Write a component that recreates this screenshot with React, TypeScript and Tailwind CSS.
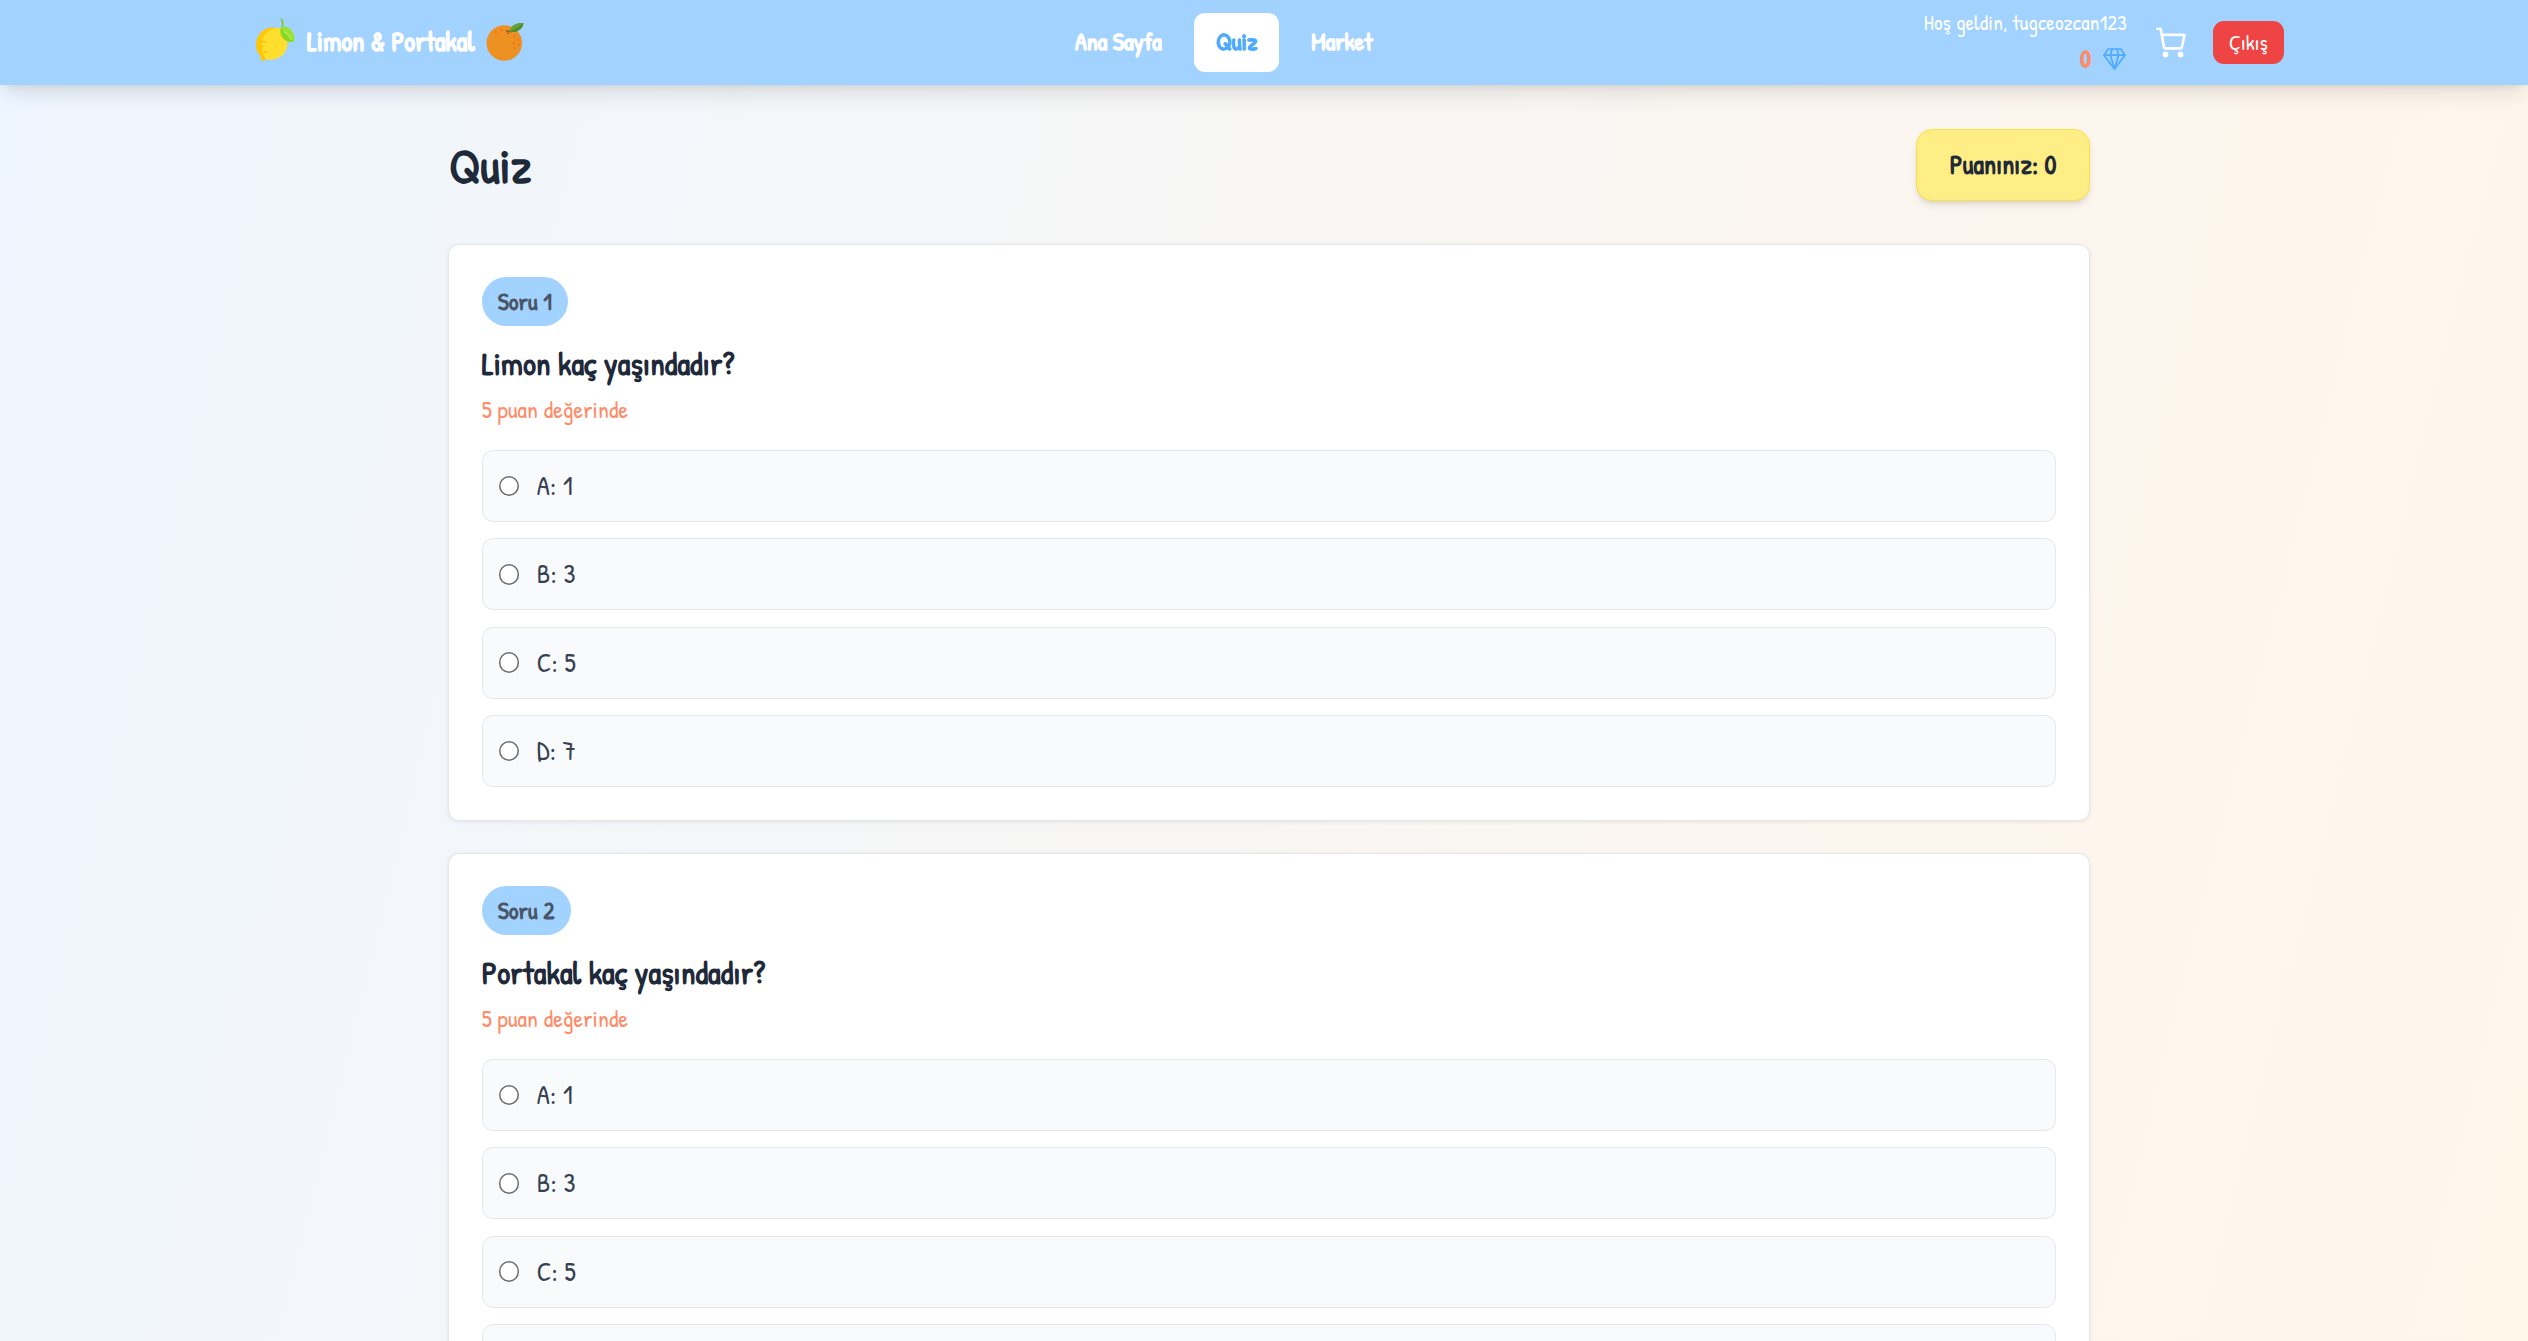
import { useState } from "react";

type Question = { id: number; text: string; points: number; options: string[] };

const questions: Question[] = [
  { id: 1, text: "Limon kaç yaşındadır?", points: 5, options: ["1", "3", "5", "7"] },
  { id: 2, text: "Portakal kaç yaşındadır?", points: 5, options: ["1", "3", "5", "7"] },
];

const letters = ["A", "B", "C", "D"];

function LemonIcon() {
  return (
    <svg viewBox="0 0 40 44" className="h-[44px] w-[40px] shrink-0">
      <path d="M17 9.5C8 9.5 1 17.500 1 27c0 5 1.800 8.500 4.600 11 .2 1.500-.2 3.200.8 4.200 1.200 1.200 3.600.6 4.200-1.200C20 42.500 30 38 32.300 27 34 17 28 9 17 9.500Z" fill="#ffc70a" />
      <path d="M26 10.500C15 8 7 17 6.800 27c-.1 5 .7 8.500 3 12.500 .5 1 1.200 1.600 2.200 2C21 43 31 38 32.300 27c.9-7-1.300-13.500-6.300-16.500Z" fill="#ffdf2e" />
      <path d="M6.500 23.500h4M5.500 28.500h3.500M7 33.500h4M10 24h1.500M10 34h1.500" stroke="#ffc70a" strokeWidth="1.500" strokeLinecap="round" fill="none" />
      <path d="M26.200 1c1.600 1.600 2 4 1 8.500" stroke="#7fc71e" strokeWidth="1.500" strokeLinecap="round" fill="none" />
      <path d="M26.200 9.200c4-2 9 .4 11.600 5 1.800 3.200 2.200 7.300.8 9.300-4.200 1.600-9.400-.8-11.600-4.400-1.700-2.800-2-7-.8-9.900Z" fill="#9be331" />
      <path d="M26.200 9.200c-1.200 2.900-.9 7.100.8 9.900 2.200 3.600 7.400 6 11.600 4.400Z" fill="#8ad824" />
      <path d="M29 13.500c3 2 5.500 4.500 7 8" stroke="#c3f27c" strokeWidth="1" strokeLinecap="round" fill="none" />
    </svg>
  );
}

function OrangeIcon() {
  return (
    <svg viewBox="0 0 38 40" className="h-[40px] w-[38px] shrink-0">
      <circle cx="18.300" cy="21" r="17.800" fill="#ed9122" />
      <path d="M20.500 8.500c2 0 3 .5 4.500 1.500M20.500 8.500c1.500.8 2 1.800 2 3M20.500 9h3.500" stroke="#8a5a1c" strokeWidth="1.200" strokeLinecap="round" fill="none" />
      <path d="M23.500 9.500C25 3 30 .5 37.500 1 37 6.500 31 11.500 23.500 9.500Z" fill="#61a032" />
      <path d="M23.500 9.500C27.500 8.800 33 5 37.500 1 37 6.500 31 11.500 23.500 9.500Z" fill="#528c2a" />
      <g fill="#f27a1a">
        <circle cx="10" cy="10.500" r="1.400" />
        <circle cx="15.500" cy="8" r="1.400" />
        <circle cx="28.500" cy="14.500" r="1.400" />
        <circle cx="32.500" cy="17.800" r="1.400" />
        <circle cx="27.800" cy="21" r="1.400" />
        <circle cx="32.500" cy="22.500" r="1.400" />
        <circle cx="28.500" cy="26" r="1.400" />
      </g>
    </svg>
  );
}

function DiamondIcon() {
  return (
    <svg viewBox="0 0 23 22" className="h-[22px] w-[23px]" fill="none" stroke="#4dabff" strokeWidth="1.700" strokeLinejoin="round" strokeLinecap="round">
      <path d="M5.200 1h12.600L22 7.200 11.500 21 1 7.200 5.200 1Z" />
      <path d="M1 7.200h21M9 1 7.400 7.200 11.500 21l4.100-13.800L14 1" />
    </svg>
  );
}

function CartIcon() {
  return (
    <svg viewBox="0 0 30 31" className="h-[31px] w-[30px]" fill="none" stroke="#fff" strokeWidth="2.600" strokeLinecap="round" strokeLinejoin="round">
      <path d="M1.300 1.700H4.600L8 20.300Q8.200 21.400 9.300 21.400H24.500Q25.500 21.400 25.800 20.400L28.500 7.900H5.800" />
      <circle cx="9.500" cy="27.400" r="2.800" fill="#fff" stroke="none" />
      <circle cx="24.500" cy="27.400" r="2.800" fill="#fff" stroke="none" />
    </svg>
  );
}

function Header() {
  return (
    <header className="relative h-[85px] bg-[#a2d2ff] shadow-[0_13px_20px_-4px_rgba(0,0,0,0.1),0_5px_8px_-5px_rgba(0,0,0,0.1)]">
      <div className="flex h-full items-center justify-between pr-[244px] pl-[255px]">
        <div className="flex items-center">
          <div className="-mt-[6px]">
            <LemonIcon />
          </div>
          <span className="-mt-[2px] ml-[12px] text-[26.67px] leading-[37px] font-bold tracking-[0.15px] whitespace-nowrap text-white [-webkit-text-stroke:0.4px_white]">Limon &amp; Portakal</span>
          <div className="ml-[11px] -mt-px">
            <OrangeIcon />
          </div>
        </div>
        <nav className="flex items-center gap-[11px] text-[24px] leading-[36px] font-bold text-white [-webkit-text-stroke:0.4px_currentColor]">
          <a className="px-[21px] pt-[10px] pb-[13px]">Ana Sayfa</a>
          <a className="rounded-[11px] bg-white px-[22px] pt-[10px] pb-[13px] text-[#4dabff]">Quiz</a>
          <a className="px-[21px] pt-[10px] pb-[13px]">Market</a>
        </nav>
        <div className="flex items-center justify-end">
          <div className="-mt-px flex flex-col items-end">
            <span className="pr-px text-[21.33px] leading-[32px] text-white">Hoş geldin, tugceozcan123</span>
            <span className="flex items-center gap-[12px] pt-px pr-[2px] text-[24px] leading-[37px] font-bold text-[#ff8c69] [-webkit-text-stroke:0.4px_#ff8c69]">
              0
              <DiamondIcon />
            </span>
          </div>
          <a className="ml-[28px]">
            <CartIcon />
          </a>
          <button className="ml-[27px] flex h-[43px] w-[71px] items-center justify-center rounded-[11px] bg-[#ef4444] text-[21.33px] leading-[32px] text-white">
            Çıkış
          </button>
        </div>
      </div>
    </header>
  );
}

function QuestionCard({ question }: { question: Question }) {
  const [selected, setSelected] = useState<number | null>(null);
  return (
    <section className="h-[576.500px] rounded-[11px] border border-gray-200 bg-white px-[32.670px] py-[32px] shadow-[0_1px_4px_rgba(0,0,0,0.08)]">
      <div className="flex">
        <span className="h-[48.500px] rounded-full bg-[#a2d2ff] px-[16px] text-[24px] leading-[48.500px] font-bold text-gray-600">
          Soru {question.id}
        </span>
      </div>
      <h2 className="mt-[17.500px] text-[32px] leading-[42px] font-bold tracking-[0.13px] text-gray-800">{question.text}</h2>
      <p className="mt-[6px] text-[24px] leading-[37px] text-[#ff8c69]">{question.points} puan değerinde</p>
      <div className="mt-[22px] flex flex-col gap-[16.330px]">
        {question.options.map((option, i) => (
          <label key={letters[i]} className="flex h-[72px] items-center rounded-[11px] border border-gray-200 bg-gray-50 pl-[16px]">
            <input
              type="radio"
              name={`question-${question.id}`}
              checked={selected === i}
              onChange={() => setSelected(i)}
              className="size-[20.500px] appearance-none rounded-full bg-white shadow-[inset_0_0_0_1.500px_#6b6b6b] checked:border-[6px] checked:border-[#4dabff]"
            />
            <span className="-mt-px ml-[17.500px] text-[26.67px] leading-[37px] tracking-[0.3px] text-gray-700">
              {letters[i]}: {option}
            </span>
          </label>
        ))}
      </div>
    </section>
  );
}

export default function App() {
  return (
    <div className="h-[1341px] overflow-hidden bg-[linear-gradient(104deg,#eef6ff_0px,#fff6ec_2400px,#fff7ea_2777px)] font-['Patrick_Hand','Open_Sans',sans-serif] tracking-[0.1px]">
      <Header />
      <main className="mx-[448px] w-[1642px] pt-[44px]">
        <div className="flex h-[72px] items-center justify-between">
          <h1 className="pl-px text-[48px] leading-[53px] font-bold text-gray-800">Quiz</h1>
          <div className="h-[72px] rounded-[16px] border border-[#fde047] bg-[#ffed85] px-[32.500px] text-[26.67px] leading-[69px] font-bold text-gray-800 shadow-[0_5px_8px_-1px_rgba(0,0,0,0.1),0_3px_5px_-3px_rgba(0,0,0,0.1)]">
            Puanınız: 0
          </div>
        </div>
        <div className="mt-[43px] flex flex-col gap-[32.500px]">
          {questions.map((question) => (
            <QuestionCard key={question.id} question={question} />
          ))}
        </div>
      </main>
    </div>
  );
}
